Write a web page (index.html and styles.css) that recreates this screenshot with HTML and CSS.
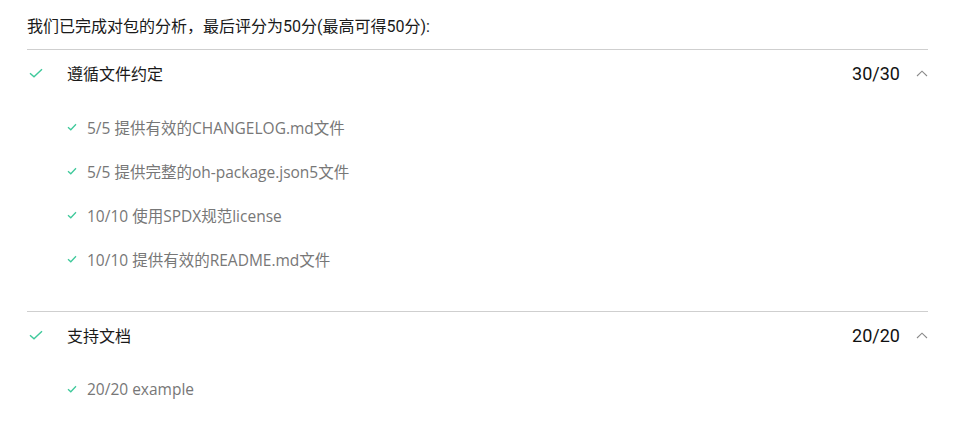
FILE: index.html
```html
<!DOCTYPE html>
<html lang="zh">
<head>
<meta charset="utf-8">
<link rel="stylesheet" href="styles.css">
</head>
<body>
<div class="page">
  <p class="intro">我们已完成对包的分析，最后评分为50分(最高可得50分):</p>
  <section class="group">
    <div class="group-head">
      <svg class="check" viewBox="0 0 14 10"><path d="M1 5.2 L5 8.8 L13 1.2"/></svg>
      <span class="title">遵循文件约定</span>
      <span class="score">30/30</span>
      <svg class="chev" viewBox="0 0 12 7"><path d="M1 6 L6 1.2 L11 6"/></svg>
    </div>
    <ul class="items">
      <li><svg class="scheck" viewBox="0 0 10 8"><path d="M1 4.2 L3.8 6.8 L9 1.2"/></svg>5/5 提供有效的CHANGELOG.md文件</li>
      <li><svg class="scheck" viewBox="0 0 10 8"><path d="M1 4.2 L3.8 6.8 L9 1.2"/></svg>5/5 提供完整的oh-package.json5文件</li>
      <li><svg class="scheck" viewBox="0 0 10 8"><path d="M1 4.2 L3.8 6.8 L9 1.2"/></svg>10/10 使用SPDX规范license</li>
      <li><svg class="scheck" viewBox="0 0 10 8"><path d="M1 4.2 L3.8 6.8 L9 1.2"/></svg>10/10 提供有效的README.md文件</li>
    </ul>
  </section>
  <section class="group">
    <div class="group-head">
      <svg class="check" viewBox="0 0 14 10"><path d="M1 5.2 L5 8.8 L13 1.2"/></svg>
      <span class="title">支持文档</span>
      <span class="score">20/20</span>
      <svg class="chev" viewBox="0 0 12 7"><path d="M1 6 L6 1.2 L11 6"/></svg>
    </div>
    <ul class="items">
      <li><svg class="scheck" viewBox="0 0 10 8"><path d="M1 4.2 L3.8 6.8 L9 1.2"/></svg>20/20 example</li>
    </ul>
  </section>
</div>
</body>
</html>
```

FILE: styles.css
```css
html, body {
  margin: 0;
  padding: 0;
  background: #fff;
}
.page {
  width: 901px;
  padding: 0 0 0 27px;
  font-family: Roboto, "Noto Sans CJK SC", sans-serif;
  color: #1a1a1a;
}
.intro {
  margin: 0;
  height: 50px;
  line-height: 54px;
  font-size: 16px;
  border-bottom: 1px solid #cfcfcf;
  box-sizing: border-box;
}
.group + .group {
  border-top: 1px solid #cfcfcf;
}
.group-head {
  display: flex;
  align-items: center;
  height: 46px;
}
.check {
  width: 14px;
  height: 10px;
  margin-left: 2px;
  fill: none;
  stroke: #3fc99b;
  stroke-width: 1.4;
}
.title {
  margin-left: 24px;
  font-size: 16px;
  flex: 1;
}
.score {
  font-size: 18px;
  color: #111;
}
.chev {
  width: 12px;
  height: 7px;
  margin-left: 16px;
  fill: none;
  stroke: #8a8a8a;
  stroke-width: 1.1;
}
.items {
  list-style: none;
  margin: 0;
  padding: 9px 0 30px 40px;
}
.items li {
  height: 44px;
  display: flex;
  align-items: center;
  font-family: "Open Sans", "Noto Sans CJK SC", sans-serif;
  font-size: 15.5px;
  color: #777;
}
.scheck {
  width: 10px;
  height: 8px;
  margin-right: 10px;
  fill: none;
  stroke: #3fc99b;
  stroke-width: 1.3;
}
```
